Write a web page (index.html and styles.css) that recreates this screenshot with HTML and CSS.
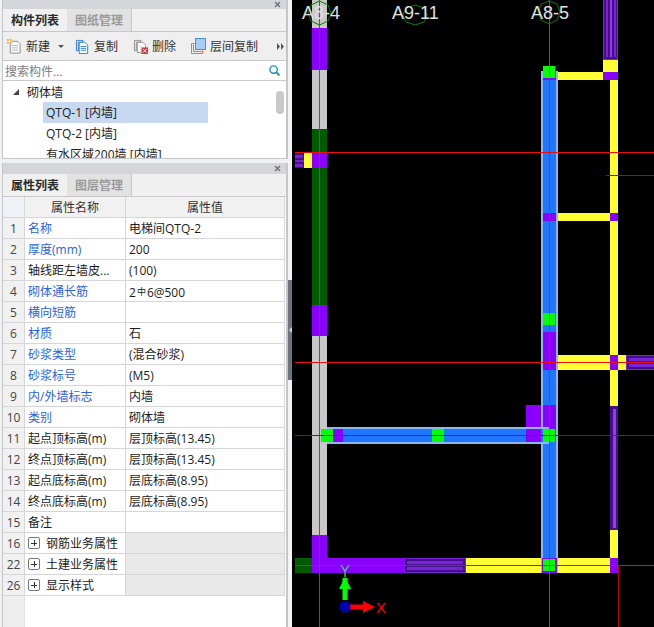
FILE: index.html
```html
<!DOCTYPE html>
<html lang="zh">
<head>
<meta charset="utf-8">
<title>构件列表</title>
<link rel="stylesheet" href="styles.css">
</head>
<body>
<div class="app">
  <aside class="side">
    <section class="panel panel-top">
      <div class="titlebar"><svg class="close" viewBox="0 0 7 7"><path d="M1 1l5 5M6 1L1 6"/></svg></div>
      <div class="tabs">
        <div class="tab active">构件列表</div>
        <div class="tab">图纸管理</div>
      </div>
      <div class="toolbar">
        <div class="tool">
          <svg class="ico" viewBox="0 0 16 16"><path d="M3.500 2.500h8l2.500 2.500v10h-10.500z" fill="#fbfbfb" stroke="#8d8d8d"/><path d="M5 7h7M5 9.500h7M5 12h7" stroke="#b5b5b5"/><rect x="0" y="0" width="5" height="5" fill="#f7a63c"/><path d="M2.500 0v5M0 2.500h5" stroke="#fff"/></svg>
          <span>新建</span><span class="caret"></span>
        </div>
        <div class="tool tool-copy">
          <svg class="ico" viewBox="0 0 16 16"><path d="M1.500 1.500h7v2h-5v9h-2z" fill="#dcebfa" stroke="#2f7fc8"/><path d="M4.500 3.500h6l3 3v9h-9z" fill="#fff" stroke="#2f7fc8"/><path d="M6 8h6M6 10h6M6 12h6" stroke="#2f7fc8"/></svg>
          <span>复制</span>
        </div>
        <div class="tool tool-del">
          <svg class="ico" viewBox="0 0 16 16"><path d="M1.500 1.500h7v2h-5v9h-2z" fill="#eee" stroke="#8d8d8d"/><path d="M4.500 3.500h6l3 3v4M4.500 3.500v11h4" fill="#fff" stroke="#8d8d8d"/><rect x="9" y="9" width="7" height="7" fill="#d8363a"/><path d="M10.500 10.500l4 4M14.500 10.500l-4 4" stroke="#fff"/></svg>
          <span>删除</span>
        </div>
        <div class="tool tool-floor">
          <svg class="ico ico-floor" viewBox="0 0 15 16"><path d="M.5 15.500v-10h3M.5 15.500h11v-3" fill="none" stroke="#ea7a22"/><path d="M2.500 13.500v-7M2.500 13.500h8" fill="none" stroke="#ea7a22"/><rect x="4.500" y=".5" width="10" height="11" fill="#a9cdf3" stroke="#4a8ed4"/></svg>
          <span>层间复制</span>
        </div>
        <div class="more"><svg viewBox="0 0 7 7"><path d="M0 0l3 3.500-3 3.500zM4 0l3 3.500-3 3.500z"/></svg></div>
      </div>
      <div class="search">
        <span class="search-hint">搜索构件...</span>
        <svg class="search-ico" viewBox="0 0 12 12"><circle cx="5" cy="5" r="4" fill="none" stroke="#1c8fc0" stroke-width="1.500"/><path d="M8 8l3.500 3.500" stroke="#1c8fc0" stroke-width="2"/></svg>
      </div>
      <div class="tree">
        <div class="tree-root"><span class="tree-arrow"></span><span>砌体墙</span></div>
        <div class="tree-item selected">QTQ-1 [内墙]</div>
        <div class="tree-item">QTQ-2 [内墙]</div>
        <div class="tree-item">有水区域200墙 [内墙]</div>
        <div class="tree-thumb"></div>
      </div>
    </section>

    <section class="panel panel-bottom">
      <div class="titlebar"><svg class="close" viewBox="0 0 7 7"><path d="M1 1l5 5M6 1L1 6"/></svg></div>
      <div class="tabs">
        <div class="tab active">属性列表</div>
        <div class="tab">图层管理</div>
      </div>
      <div class="grid">
        <div class="cell num head"></div><div class="cell head name-head">属性名称</div><div class="cell head val-head">属性值</div>
        <div class="cell num">1</div><div class="cell key link">名称</div><div class="cell val">电梯间QTQ-2</div>
        <div class="cell num">2</div><div class="cell key link">厚度(mm)</div><div class="cell val">200</div>
        <div class="cell num">3</div><div class="cell key">轴线距左墙皮...</div><div class="cell val">(100)</div>
        <div class="cell num">4</div><div class="cell key link">砌体通长筋</div><div class="cell val">2<span class="rebar">中</span>6@500</div>
        <div class="cell num">5</div><div class="cell key link">横向短筋</div><div class="cell val"></div>
        <div class="cell num">6</div><div class="cell key link">材质</div><div class="cell val">石</div>
        <div class="cell num">7</div><div class="cell key link">砂浆类型</div><div class="cell val">(混合砂浆)</div>
        <div class="cell num">8</div><div class="cell key link">砂浆标号</div><div class="cell val">(M5)</div>
        <div class="cell num">9</div><div class="cell key link">内/外墙标志</div><div class="cell val">内墙</div>
        <div class="cell num">10</div><div class="cell key link">类别</div><div class="cell val">砌体墙</div>
        <div class="cell num">11</div><div class="cell key">起点顶标高(m)</div><div class="cell val">层顶标高(13.45)</div>
        <div class="cell num">12</div><div class="cell key">终点顶标高(m)</div><div class="cell val">层顶标高(13.45)</div>
        <div class="cell num">13</div><div class="cell key">起点底标高(m)</div><div class="cell val">层底标高(8.95)</div>
        <div class="cell num">14</div><div class="cell key">终点底标高(m)</div><div class="cell val">层底标高(8.95)</div>
        <div class="cell num">15</div><div class="cell key">备注</div><div class="cell val"></div>
        <div class="cell num">16</div><div class="cell key group"><span class="plus"></span>钢筋业务属性</div><div class="cell val shaded"></div>
        <div class="cell num">22</div><div class="cell key group"><span class="plus"></span>土建业务属性</div><div class="cell val shaded"></div>
        <div class="cell num">26</div><div class="cell key group"><span class="plus"></span>显示样式</div><div class="cell val shaded"></div>
      </div>
      <div class="gutter-fill"></div>
    </section>
  </aside>

  <div class="splitter"><div class="splitter-handle"><span class="splitter-arrow"></span></div></div>

  <main class="canvas">
    <svg class="drawing" viewBox="292 0 362 627" shape-rendering="crispEdges">
      <!-- left wall -->
      <rect class="grey" x="312" y="0" width="15" height="28"/>
      <rect class="violet" x="312" y="28" width="15" height="42"/>
      <rect class="grey" x="312" y="70" width="15" height="59"/>
      <rect class="dkgreen" x="312" y="129" width="15" height="176"/>
      <rect class="violet" x="312" y="152" width="15" height="16"/>
      <rect class="yellow" x="304" y="153" width="8" height="15"/>
      <rect class="h-dark" x="295" y="153" width="9" height="15"/>
      <rect class="h-bright" x="295" y="155" width="8" height="3"/>
      <rect class="h-bright" x="295" y="160" width="9" height="2"/>
      <rect class="h-bright" x="295" y="164" width="8" height="3"/>
      <rect class="violet" x="312" y="305" width="15" height="31"/>
      <rect class="grey" x="312" y="336" width="15" height="199"/>
      <rect class="violet" x="312" y="535" width="15" height="38"/>

      <!-- bottom band -->
      <rect class="dkgreen" x="295" y="558" width="17" height="15"/>
      <rect class="violet" x="312" y="558" width="92" height="15"/>
      <rect class="h-edge" x="404" y="558" width="62" height="15"/>
      <rect class="h-dark" x="405" y="559" width="60" height="13"/>
      <rect class="h-bright" x="407" y="561" width="56" height="3"/>
      <rect class="h-bright" x="407" y="567" width="56" height="3"/>
      <rect class="yellow" x="466" y="558" width="144" height="15"/>
      <rect class="violet" x="610" y="558" width="8" height="15"/>

      <!-- right yellow structure -->
      <rect class="h-edge" x="603" y="0" width="15" height="60"/>
      <rect class="h-dark" x="604" y="0" width="13" height="59"/>
      <rect class="h-bright" x="606" y="0" width="2" height="57"/>
      <rect class="v-light" x="610" y="0" width="2" height="57"/>
      <rect class="h-bright" x="614" y="0" width="2" height="57"/>
      <rect class="yellow" x="603" y="60" width="15" height="12"/>
      <rect class="yellow" x="558" y="72" width="45" height="8"/>
      <rect class="violet" x="603" y="72" width="15" height="8"/>
      <rect class="yellow" x="610" y="80" width="8" height="326"/>
      <rect class="yellow" x="558" y="213" width="52" height="8"/>
      <rect class="violet" x="610" y="213" width="8" height="8"/>
      <rect class="yellow" x="558" y="355" width="68" height="15"/>
      <rect class="violet" x="610" y="355" width="8" height="15"/>
      <rect class="h-edge" x="626" y="355" width="28" height="15"/>
      <rect class="h-dark" x="627" y="356" width="27" height="13"/>
      <rect class="h-bright" x="629" y="358" width="25" height="3"/>
      <rect class="h-bright" x="629" y="364" width="25" height="3"/>
      <rect class="h-dark" x="610" y="406" width="8" height="124"/>
      <rect class="v-light" x="613" y="409" width="3" height="119"/>
      <rect class="yellow" x="610" y="530" width="8" height="28"/>

      <!-- blue vertical wall -->
      <rect class="violet" x="526" y="405" width="30" height="37"/>
      <rect class="blue-edge" x="541" y="71" width="17" height="502"/>
      <rect class="blue" x="543" y="71" width="13" height="502"/>
      <rect class="violet" x="543" y="74" width="13" height="6"/>
      <rect class="violet" x="543" y="213" width="13" height="8"/>
      <rect class="violet" x="543" y="332" width="13" height="38"/>
      <rect class="violet" x="543" y="405" width="13" height="37"/>

      <!-- blue horizontal wall -->
      <rect class="blue-edge" x="327" y="427" width="222" height="17"/>
      <rect class="blue" x="327" y="429" width="222" height="13"/>
      <rect class="violet" x="333" y="429" width="10" height="13"/>
      <rect class="violet" x="526" y="429" width="15" height="13"/>

      <!-- nodes -->
      <rect class="node" x="543" y="66" width="12" height="12"/>
      <rect class="node" x="543" y="313" width="12" height="12"/>
      <rect class="node" x="543" y="429" width="12" height="13"/>
      <rect class="node" x="321" y="429" width="12" height="13"/>
      <rect class="node" x="432" y="429" width="12" height="13"/>
      <rect class="violet" x="542" y="558" width="15" height="15"/>
      <rect class="node" x="543" y="559" width="12" height="12"/>

      <!-- axes -->
      <path class="axis-wall" d="M319.500 0V627M549.500 0V627"/>
      <path class="axis-bright" d="M295 152.500H654M295 362.500H654"/>
      <path class="axis" d="M606 175.500H654M295 435.500H654"/>
      <path class="axis-bright" d="M295 565.500H654"/>
      <path class="axis" d="M618.500 565V627"/>

      <!-- grid labels -->
      <g shape-rendering="auto">
        <polygon class="hex" points="319.500,1 328,5 331,13 328,21 319.500,25 311,21 308,13 311,5"/>
        <polygon class="hex" points="415,5 424,8 427,15 424,22 415,25 406,22 403,15 406,8"/>
        <polygon class="hex" points="549,1 557,4 560,12 557,20 549,24 541,20 538,12 541,4"/>
        <text class="label" x="302" y="19">A8-4</text>
        <text class="label" x="392" y="19">A9-11</text>
        <text class="label" x="531" y="19">A8-5</text>

        <!-- origin marker -->
        <path d="M345 600V578" stroke="#00ff00" stroke-width="5"/>
        <path d="M345 577l6 12h-12z" fill="#00ff00"/>
        <path d="M350 607H368" stroke="#ff0000" stroke-width="5"/>
        <path d="M375 607l-12-6v12z" fill="#ff0000"/>
        <circle cx="345" cy="607" r="5.500" fill="#0000b4"/>
        <path d="M341 565l4 6 4-6M345 571v6" fill="none" stroke="#38e070" stroke-width="1.300"/>
        <text class="axis-x" x="376" y="613">X</text>
      </g>
    </svg>
  </main>
</div>
</body>
</html>
```

FILE: styles.css
```css
* { box-sizing: border-box; }
html, body { margin: 0; height: 100%; }
body {
  width: 654px;
  height: 627px;
  overflow: hidden;
  background: #f1f1f3;
  font-family: "Open Sans", "Noto Sans CJK SC", "Liberation Sans", sans-serif;
  font-size: 12px;
  color: #1c1c1c;
}
.app { display: flex; height: 627px; }

.side {
  width: 288px;
  padding-left: 2px;
  display: flex;
  flex-direction: column;
  gap: 4px;
  background: #f0f1f3;
}
.panel {
  display: flex;
  flex-direction: column;
  width: 286px;
  background: #fff;
  border-left: 1px solid #c4c6c9;
  border-right: 2px solid #c4c6c9;
  overflow: hidden;
}
.panel-top { height: 159px; border-bottom: 1px solid #c4c6c9; }
.panel-bottom { flex: 1; }

.titlebar {
  height: 9px;
  flex: none;
  background: #d4d6da;
  display: flex;
  justify-content: flex-end;
  align-items: center;
  padding-right: 5px;
}
.panel-bottom .titlebar { height: 11px; }
.close { width: 7px; height: 7px; }
.close path { stroke: #6b6f75; stroke-width: 1.300; fill: none; }

.tabs {
  display: flex;
  height: 23px;
  flex: none;
  background: #f0f0f0;
  border-bottom: 1px solid #c6c8cb;
}
.tab {
  padding: 0 8px;
  width: 65px;
  line-height: 23px;
  font-weight: 700;
  color: #9a9a9a;
  background: #e2e2e2;
  border-right: 1px solid #c6c8cb;
  white-space: nowrap;
}
.tab.active { width: 64px; color: #2b2b2b; background: #f0f0f0; border-right: 0; }

.toolbar {
  height: 29px;
  flex: none;
  display: flex;
  align-items: center;
  background: #efefef;
  border-bottom: 1px solid #c6c8cb;
  padding-left: 4px;
  position: relative;
}
.tool { display: flex; align-items: center; gap: 4px; color: #333; white-space: nowrap; }
.ico { width: 15px; height: 15px; flex: none; }
.caret {
  margin-left: 4px;
  border-top: 3px solid #555;
  border-left: 3px solid transparent;
  border-right: 3px solid transparent;
}
.tool-copy { margin-left: 11px; gap: 4px; }
.tool-del { margin-left: 15px; gap: 4px; }
.tool-floor { margin-left: 15px; gap: 4px; }
.ico-floor { width: 15px; height: 16px; }
.more { margin-left: auto; margin-right: 2px; width: 7px; height: 7px; display: flex; }
.more svg { width: 7px; height: 7px; fill: #555; }

.search {
  height: 20px;
  flex: none;
  display: flex;
  align-items: center;
  justify-content: space-between;
  padding: 0 6px 0 2px;
  border-bottom: 1px solid #c6c8cb;
  background: #fff;
}
.search-hint { color: #7d7d7d; }
.search-ico { width: 11px; height: 11px; }

.tree { flex: 1; overflow: hidden; position: relative; background: #fff; }
.tree-root { height: 21px; padding-left: 10px; display: flex; align-items: center; gap: 8px; }
.tree-arrow {
  width: 0; height: 0;
  border-bottom: 6px solid #444;
  border-left: 6px solid transparent;
}
.tree-item { height: 21px; width: 165px; margin-left: 40px; padding-left: 3px; line-height: 21px; white-space: nowrap; }
.tree-item.selected { background: #c7d9f0; }
.tree-thumb {
  position: absolute;
  right: 2px;
  top: 10px;
  width: 8px;
  height: 23px;
  border-radius: 4px;
  background: #c8c8c8;
}

.grid {
  display: grid;
  grid-template-columns: 22px 101px 159px;
  grid-auto-rows: 21px;
  flex: none;
}
.cell {
  border-right: 1px solid #d4d6d8;
  border-bottom: 1px solid #d4d6d8;
  line-height: 21px;
  padding-left: 3px;
  white-space: nowrap;
  overflow: hidden;
  background: #fff;
}
.cell.head { background: #f1f1f1; text-align: center; color: #333; padding-left: 0; }
.cell.num.head { background: #eef2f7; }
.cell.num { background: #f1f1f1; text-align: center; padding: 0; color: #444; }
.link { color: #2d62dc; }
.cell.val { padding-left: 3px; }
.shaded { background: #e9e9e9; }
.rebar { font-size: 9px; vertical-align: 2px; margin: 0 1px; }
.group { display: flex; align-items: center; }
.plus {
  width: 12px;
  height: 12px;
  margin-right: 6px;
  border: 1px solid #777;
  border-radius: 2px;
  flex: none;
  background:
    linear-gradient(#333, #333) center / 6px 1px no-repeat,
    linear-gradient(#333, #333) center / 1px 6px no-repeat;
}
.gutter-fill { flex: 1; width: 22px; background: #eeeeee; border-right: 1px solid #e2e2e2; }

.splitter {
  width: 4px;
  flex: none;
  display: flex;
  align-items: flex-start;
  background: #f4f4f4;
}
.splitter-handle {
  margin-top: 280px;
  width: 4px;
  height: 100px;
  background: #6c7480;
  display: flex;
  align-items: center;
  justify-content: center;
}
.splitter-arrow {
  border-right: 3px solid #d0d0d0;
  border-top: 3px solid transparent;
  border-bottom: 3px solid transparent;
}

.canvas { flex: 1; background: #000; overflow: hidden; }
.drawing { display: block; width: 362px; height: 627px; }
.grey { fill: #c8c8c8; }
.violet { fill: #8a00ff; }
.dkgreen { fill: #005a00; }
.yellow { fill: #ffff33; }
.blue { fill: #2176ff; }
.blue-edge { fill: #8ab8f0; }
.node { fill: #00ff00; }
.h-edge { fill: #7a22d8; }
.h-dark { fill: #43108a; }
.h-bright { fill: #7a22d8; }
.v-light { fill: #9a3be8; }
.axis { stroke: #c00000; stroke-width: 1; fill: none; }
.axis-wall { stroke: #e02020; stroke-width: 1; fill: none; }
.axis-bright { stroke: #e81010; stroke-width: 1; fill: none; }
.hex { fill: none; stroke: #0a7a0a; stroke-width: 1; }
.label {
  font-family: "Liberation Sans", sans-serif;
  font-size: 18px;
  fill: #e0e0e0;
}
.axis-x {
  font-family: "Liberation Sans", sans-serif;
  font-size: 15px;
  fill: #ff0000;
}
```
